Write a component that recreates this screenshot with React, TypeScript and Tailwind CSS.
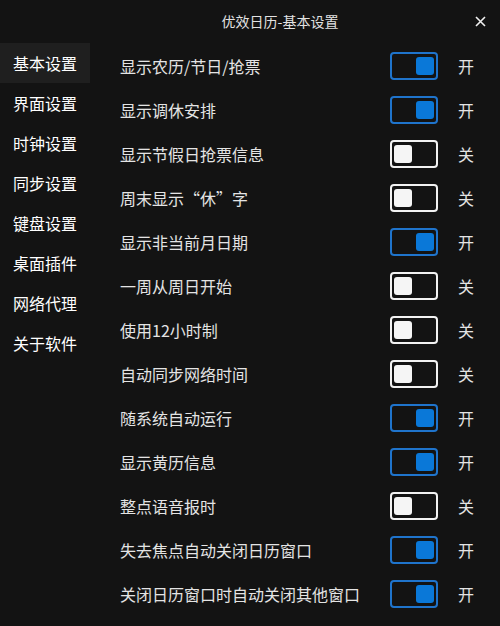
const menu = [
  "基本设置",
  "界面设置",
  "时钟设置",
  "同步设置",
  "键盘设置",
  "桌面插件",
  "网络代理",
  "关于软件",
];

const options: [string, boolean][] = [
  ["显示农历/节日/抢票", true],
  ["显示调休安排", true],
  ["显示节假日抢票信息", false],
  ["周末显示“休”字", false],
  ["显示非当前月日期", true],
  ["一周从周日开始", false],
  ["使用12小时制", false],
  ["自动同步网络时间", false],
  ["随系统自动运行", true],
  ["显示黄历信息", true],
  ["整点语音报时", false],
  ["失去焦点自动关闭日历窗口", true],
  ["关闭日历窗口时自动关闭其他窗口", true],
];

function Toggle({ on }: { on: boolean }) {
  return (
    <div
      className={`flex h-[28px] w-[48px] items-center rounded-[4px] border-2 p-[2px] ${
        on ? "justify-end border-[#1f74cc]" : "justify-start border-[#f2f2f2]"
      }`}
    >
      <div
        className={`h-[18px] w-[18px] rounded-[3px] ${on ? "bg-[#0a78d8]" : "bg-[#f5f5f5]"}`}
      />
    </div>
  );
}

export default function App() {
  return (
    <div
      className="h-[626px] w-[500px] overflow-hidden bg-[#131313] text-[#e6e6e6]"
      style={{ fontFamily: '"Noto Sans CJK SC", "Noto Sans", sans-serif' }}
    >
      <div className="flex h-[43px] items-center pl-[100px]">
        <div className="flex-1 pb-[1px] text-center text-[14px] text-[#e2e2e2]">优效日历-基本设置</div>
        <div className="flex w-[40px] items-center justify-center pb-[1px]">
          <svg width="11" height="11" viewBox="0 0 11 11">
            <path d="M1 1L10 10M10 1L1 10" stroke="#f0f0f0" strokeWidth="1.6" />
          </svg>
        </div>
      </div>
      <div className="flex">
        <div className="w-[90px] shrink-0">
          {menu.map((m, i) => (
            <div
              key={m}
              className={`flex h-[40px] items-center pb-[1px] pl-[13px] text-[16px] text-white ${
                i === 0 ? "bg-[#1f1f1f]" : ""
              }`}
            >
              {m}
            </div>
          ))}
        </div>
        <div className="flex-1 pt-[1px]">
          {options.map(([label, on]) => (
            <div key={label} className="flex h-[44px] items-center pl-[30px] pr-[26px]">
              <div className="flex-1 pb-[1px] text-[16px] leading-[20px] text-[#e4e4e4]">{label}</div>
              <Toggle on={on} />
              <div className="ml-[20px] w-[16px] pb-[1px] text-[16px] leading-[20px] text-[#e4e4e4]">
                {on ? "开" : "关"}
              </div>
            </div>
          ))}
        </div>
      </div>
    </div>
  );
}
